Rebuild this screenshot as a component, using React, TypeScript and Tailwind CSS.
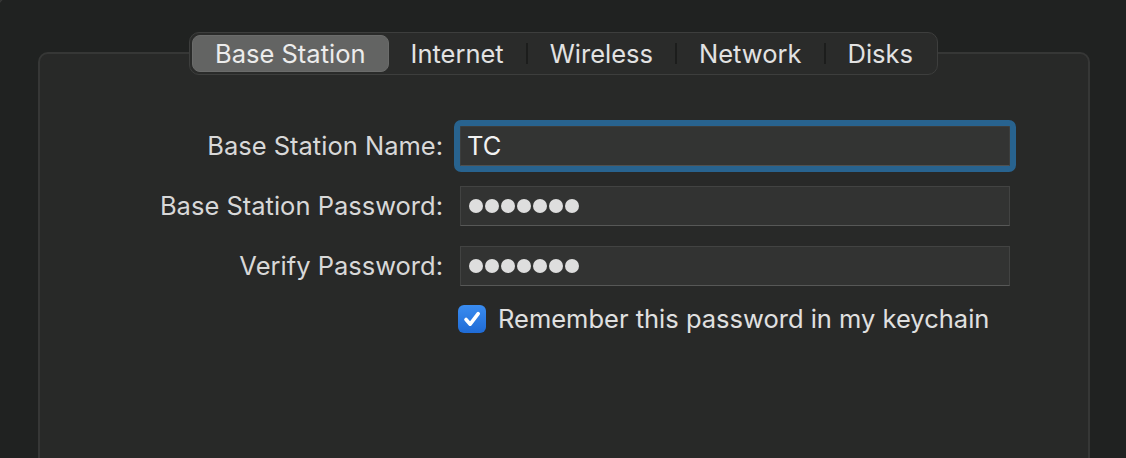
import React from "react";

const tabs = ["Base Station", "Internet", "Wireless", "Network", "Disks"];

function Dots() {
  return (
    <div className="flex items-center gap-[2px]" aria-label="•••••••">
      {Array.from({ length: 7 }).map((_, i) => (
        <span key={i} className="block w-[14px] h-[14px] rounded-full bg-[#dedede]" />
      ))}
    </div>
  );
}

export default function App() {
  return (
    <div
      className="w-[1126px] h-[458px] overflow-hidden bg-[#202221] relative"
      style={{ fontFamily: "Inter, 'Noto Sans', 'Liberation Sans', sans-serif" }}
    >
      <div className="absolute left-0 top-0 w-[14px] h-[14px] rounded-tl-[12px] border-l border-t border-[#3a3b3a] -translate-x-[3px] -translate-y-[3px]" />
      <div className="pt-[32px] pl-[38px] pr-[36px]">
        <div className="relative z-10 flex justify-center pr-[1px]">
          <div className="flex items-stretch h-[43px] rounded-[10px] border border-[#3d3e3d] bg-[#2a2b2a] p-[2px]">
            {tabs.map((t, i) => (
              <React.Fragment key={t}>
                {i > 1 && (
                  <div className="w-[2px] my-[8px] bg-[#1c1d1c]" />
                )}
                <div
                  className={
                    i === 0
                      ? "flex items-center px-[22px] rounded-[8px] bg-[#636463] border border-[#6b6c6b] text-[25.5px] text-[#ececec] leading-none"
                      : "flex items-center px-[22px] text-[25.5px] text-[#e2e2e2] leading-none"
                  }
                >
                  {t}
                </div>
              </React.Fragment>
            ))}
          </div>
        </div>
        <div className="-mt-[23px] h-[440px] rounded-[10px] border-2 border-[#363736] bg-[#282928]">
          <div className="grid grid-cols-[403px_550px] gap-x-[17px] gap-y-[20px] pt-[72px] items-center">
            <div className="text-right text-[25.5px] text-[#d8d8d8] leading-none">Base Station Name:</div>
            <div className="h-[40px] flex items-center pl-[6px] bg-[#333433] border border-[#3c3d3c] border-b-[#505150] rounded-[1px] outline outline-[6px] outline-[#28638f] text-[25.5px] text-[#f2f2f2] leading-none">
              TC
            </div>
            <div className="text-right text-[25.5px] text-[#d8d8d8] leading-none">Base Station Password:</div>
            <div className="h-[40px] flex items-center pl-[8px] bg-[#323332] border border-[#424342] border-b-[#575857]">
              <Dots />
            </div>
            <div className="text-right text-[25.5px] text-[#d8d8d8] leading-none">Verify Password:</div>
            <div className="h-[40px] flex items-center pl-[8px] bg-[#323332] border border-[#424342] border-b-[#575857]">
              <Dots />
            </div>
            <div />
            <div className="flex items-center gap-[12px] -ml-[2px] -mt-[1px]">
              <div className="w-[28px] h-[28px] rounded-[6px] bg-gradient-to-b from-[#3a8cf0] to-[#1f6bd6] flex items-center justify-center">
                <svg width="28" height="28" viewBox="0 0 28 28" fill="none">
                  <path d="M8 14.5 L12.2 19.2 L20.2 8.6" stroke="white" strokeWidth="3.6" strokeLinecap="round" strokeLinejoin="round" />
                </svg>
              </div>
              <span className="text-[25.5px] text-[#e0e0e0] leading-none">Remember this password in my keychain</span>
            </div>
          </div>
        </div>
      </div>
    </div>
  );
}
